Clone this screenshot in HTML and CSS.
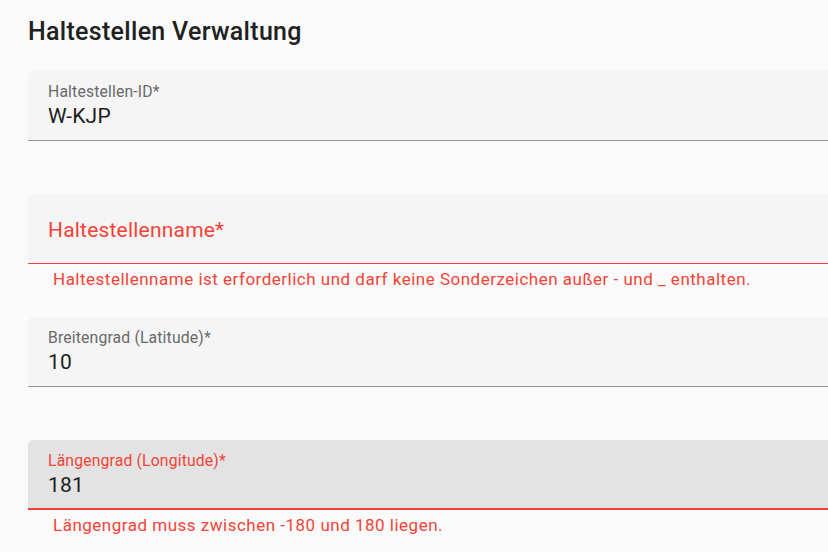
FILE: index.html
```html
<!DOCTYPE html>
<html lang="de">
<head>
<meta charset="utf-8">
<title>Haltestellen Verwaltung</title>
<link rel="stylesheet" href="styles.css">
</head>
<body>
<main class="page">
  <h1 class="title">Haltestellen Verwaltung</h1>
  <form class="form">
    <div class="group">
      <div class="field">
        <label class="label">Haltestellen-ID*</label>
        <div class="value">W-KJP</div>
      </div>
      <div class="details"></div>
    </div>
    <div class="group">
      <div class="field field-empty field-error">
        <label class="label-big">Haltestellenname*</label>
      </div>
      <div class="details error-text">Haltestellenname ist erforderlich und darf keine Sonderzeichen außer - und _ enthalten.</div>
    </div>
    <div class="group">
      <div class="field">
        <label class="label">Breitengrad (Latitude)*</label>
        <div class="value">10</div>
      </div>
      <div class="details"></div>
    </div>
    <div class="group">
      <div class="field field-focused field-error">
        <label class="label">Längengrad (Longitude)*</label>
        <div class="value">181</div>
      </div>
      <div class="details error-text">Längengrad muss zwischen -180 und 180 liegen.</div>
    </div>
  </form>
</main>
</body>
</html>
```

FILE: styles.css
```css
html, body {
  margin: 0;
  padding: 0;
  background: #fafafa;
  overflow: hidden;
}

body {
  font-family: Roboto, "Noto Sans", "Liberation Sans", sans-serif;
  width: 828px;
  height: 552px;
}

.page {
  padding: 16px 0 0 28px;
  display: flex;
  flex-direction: column;
}

.title {
  margin: 0;
  font-size: 25px;
  line-height: 32px;
  font-weight: 500;
  letter-spacing: 0.3px;
  color: #212121;
}

.form {
  margin-top: 23px;
  width: 1100px;
  display: flex;
  flex-direction: column;
  gap: 25px;
}

.group {
  display: flex;
  flex-direction: column;
}

.field {
  box-sizing: border-box;
  height: 70px;
  background: #f5f5f5;
  border-radius: 5px 5px 0 0;
  border-bottom: 1px solid #949494;
  padding: 11px 20px 0;
  display: flex;
  flex-direction: column;
}

.field-focused {
  background: #e3e3e3;
  border-bottom: 2px solid #f44336;
}

.field-error {
  border-bottom-color: #f44336;
}

.field-empty {
  justify-content: center;
  padding-top: 3px;
}

.label {
  font-size: 15.75px;
  line-height: 19px;
  letter-spacing: 0.15px;
  color: #696969;
  margin-bottom: 2px;
}

.field-focused .label {
  color: #f44336;
}

.label-big {
  font-size: 21px;
  line-height: 26px;
  letter-spacing: 0.2px;
  color: #f44336;
}

.value {
  font-size: 21px;
  line-height: 26px;
  letter-spacing: 0.2px;
  color: #1e1e1e;
}

.details {
  box-sizing: border-box;
  height: 28px;
  padding: 5px 0 0 25px;
  font-size: 17px;
  line-height: 20px;
  letter-spacing: 0.5px;
}

.error-text {
  color: #f44336;
}
```
